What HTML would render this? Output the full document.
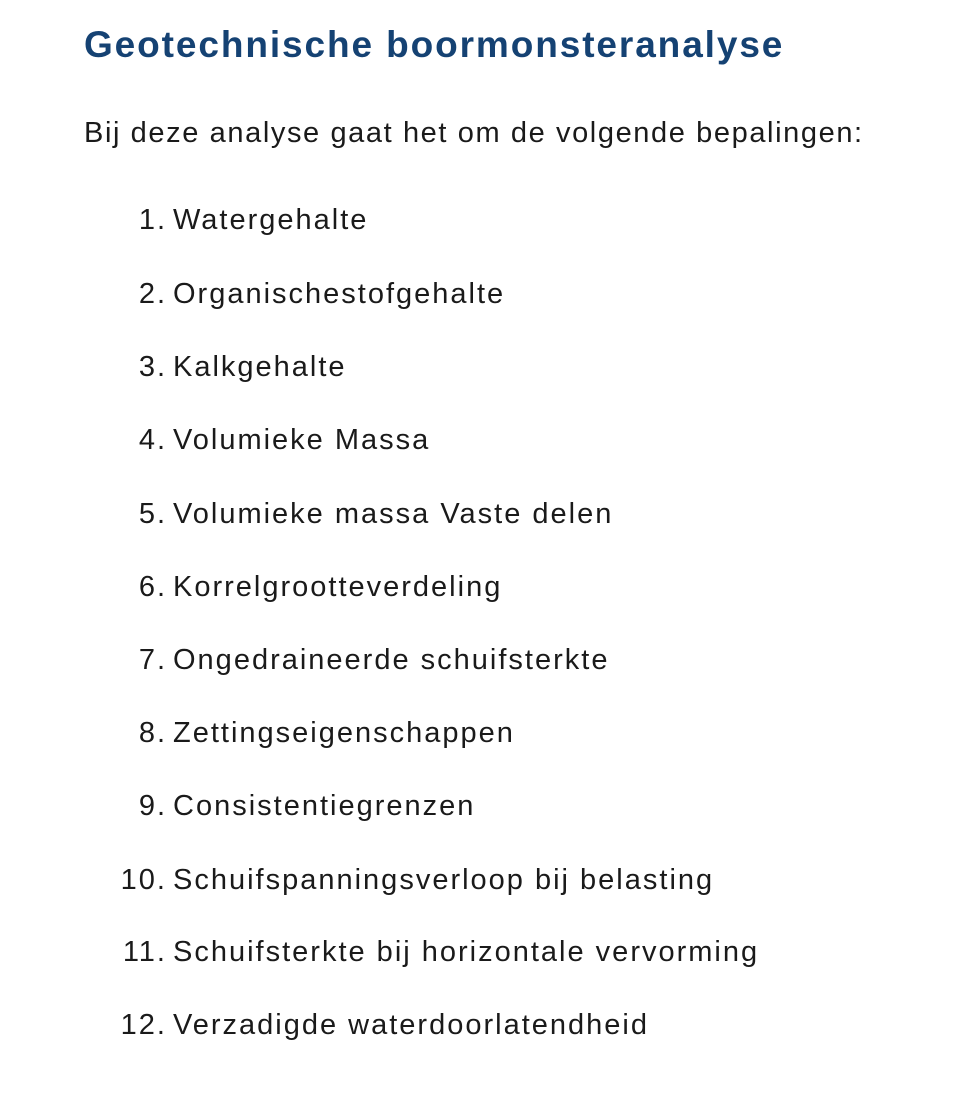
<!DOCTYPE html>
<html><head><meta charset="utf-8"><style>
html,body{margin:0;padding:0;background:#fff;width:976px;height:1096px;overflow:hidden;font-family:"Liberation Sans",sans-serif;color:#1a1a1a}
.h{position:absolute;left:84px;top:21px;font-size:37px;font-weight:bold;color:#154273;line-height:48px;letter-spacing:1.9px;white-space:nowrap}
.p{position:absolute;left:84px;top:113px;font-size:29px;line-height:40px;letter-spacing:1.6px;white-space:nowrap}
.li{position:absolute;left:0;font-size:29px;line-height:40px;white-space:nowrap;letter-spacing:2px}
.n{display:inline-block;width:167px;text-align:right}
.t{position:absolute;left:173px}
</style></head><body>
<div class="h">Geotechnische boormonsteranalyse</div>
<div class="p">Bij deze analyse gaat het om de volgende bepalingen:</div>
<div class="li" style="top:200px"><span class="n">1.</span><span class="t">Watergehalte</span></div>
<div class="li" style="top:274px"><span class="n">2.</span><span class="t">Organischestofgehalte</span></div>
<div class="li" style="top:347px"><span class="n">3.</span><span class="t">Kalkgehalte</span></div>
<div class="li" style="top:420px"><span class="n">4.</span><span class="t">Volumieke Massa</span></div>
<div class="li" style="top:494px"><span class="n">5.</span><span class="t">Volumieke massa Vaste delen</span></div>
<div class="li" style="top:567px"><span class="n">6.</span><span class="t">Korrelgrootteverdeling</span></div>
<div class="li" style="top:640px"><span class="n">7.</span><span class="t">Ongedraineerde schuifsterkte</span></div>
<div class="li" style="top:713px"><span class="n">8.</span><span class="t">Zettingseigenschappen</span></div>
<div class="li" style="top:786px"><span class="n">9.</span><span class="t">Consistentiegrenzen</span></div>
<div class="li" style="top:860px"><span class="n">10.</span><span class="t">Schuifspanningsverloop bij belasting</span></div>
<div class="li" style="top:932px"><span class="n">11.</span><span class="t">Schuifsterkte bij horizontale vervorming</span></div>
<div class="li" style="top:1005px"><span class="n">12.</span><span class="t">Verzadigde waterdoorlatendheid</span></div>
</body></html>
